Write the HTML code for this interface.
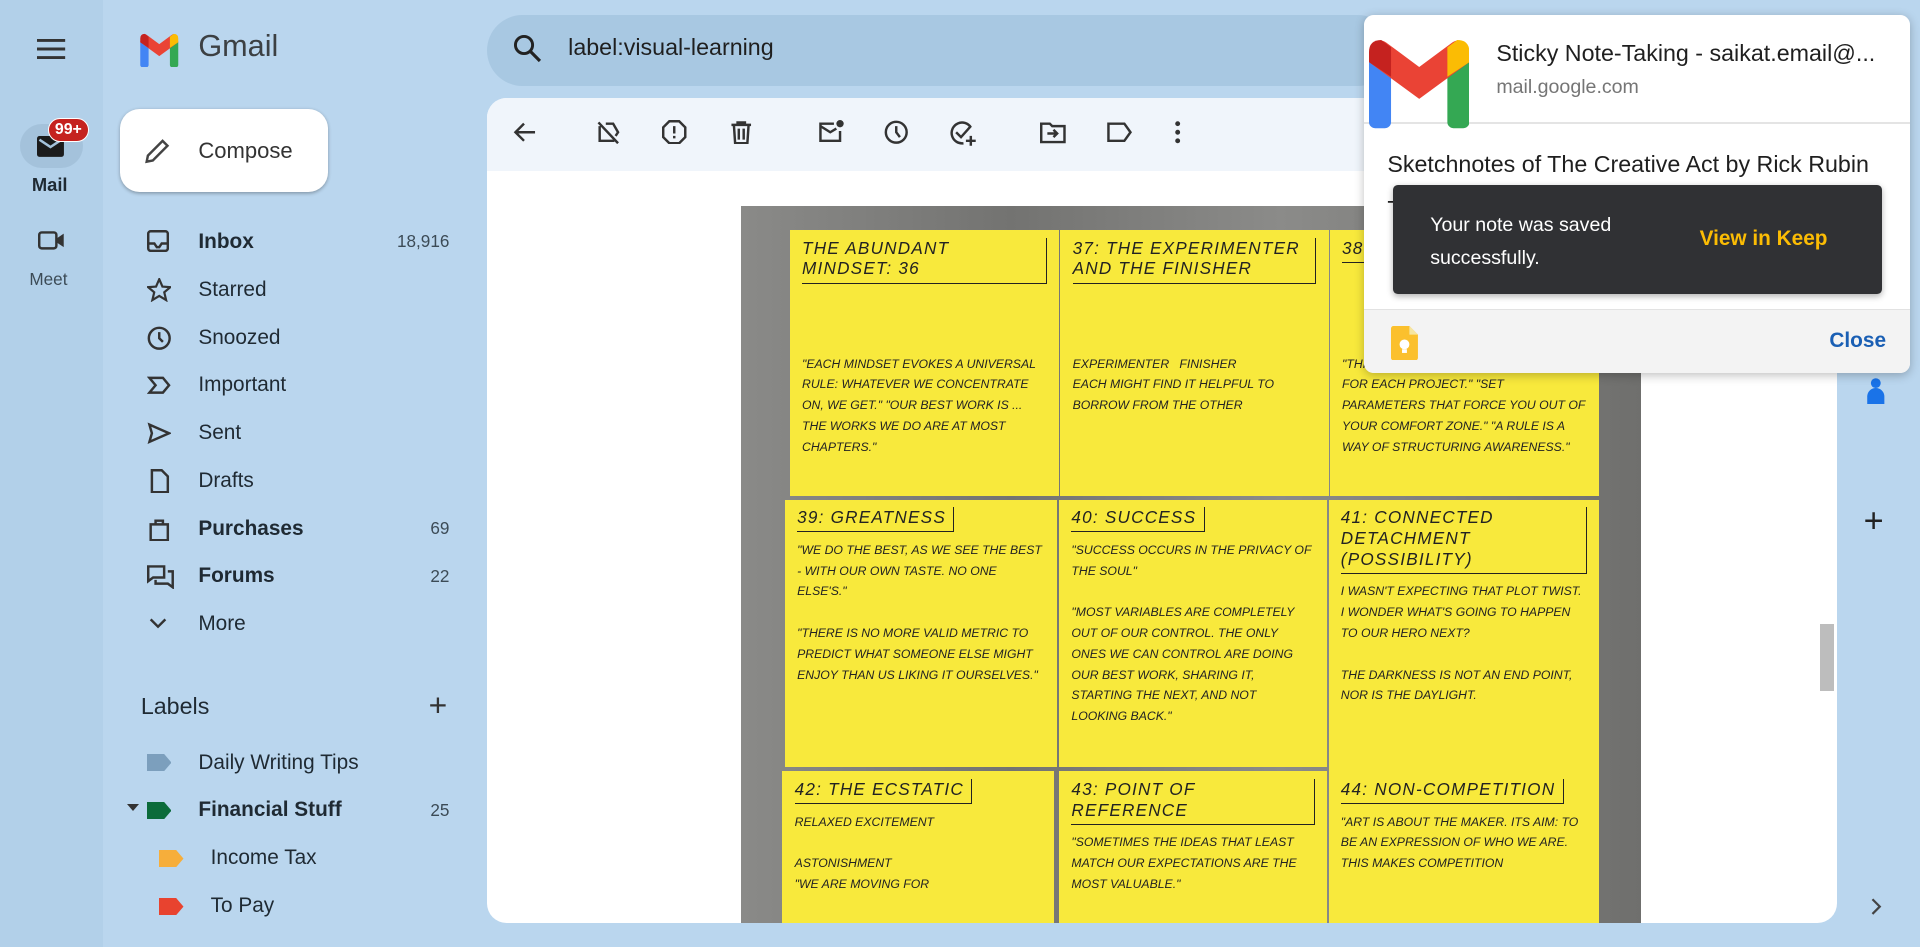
<!DOCTYPE html>
<html><head><meta charset="utf-8"><style>
html,body{margin:0;padding:0;width:1920px;height:947px;overflow:hidden;background:#bad6ee;}
#w{zoom:1.22449;width:1568px;height:774px;position:relative;font-family:"Liberation Sans",sans-serif;color:#1f1f1f;}
.a{position:absolute}
.rail{left:0;top:0;width:84px;height:774px;background:#b2d0e9}
.nav{left:98px;width:282px;height:39px}
.nav .t{position:absolute;left:64px;top:10px;font-size:17px;color:#1f2a33}
.nav .c{position:absolute;right:13px;top:11px;font-size:14px;color:#3c4b56}
.nav svg{position:absolute;left:22px;top:10px}
.b{font-weight:bold}
.note{position:absolute;background:#f8e93c;font-family:"Liberation Sans",sans-serif;font-style:italic;color:#222;font-size:10px;line-height:17px;padding:6px 10px;box-sizing:border-box;overflow:hidden}
.note h4{margin:0 0 6px;font-size:14px;font-weight:normal;letter-spacing:1px;border-bottom:1.5px solid #222;border-right:1.5px solid #222;display:inline-block;padding:0 6px 3px 0}
.ti svg{position:absolute;top:98px}
</style></head><body><div id="w">
<div class="a rail"></div>
<svg class="a" style="left:30px;top:31px" width="24" height="18"><path d="M0 2h23M0 9h23M0 16h23" stroke="#333" stroke-width="2.4"/></svg>
<div class="a" style="left:16px;top:101px;width:52px;height:36px;border-radius:18px;background:#a4c2db"></div>
<svg class="a" style="left:30px;top:111px" width="22" height="17"><rect width="22" height="17" rx="2" fill="#1b1b1b"/><path d="M2 3l9 6 9-6" stroke="#a4c2db" stroke-width="2" fill="none"/></svg>
<div class="a" style="left:39px;top:96px;background:#c5221f;color:#fff;font-size:13px;font-weight:bold;border-radius:10px;padding:2px 5px;border:1px solid #fff">99+</div>
<div class="a" style="left:26px;top:142px;font-size:15px;font-weight:bold;color:#1f2a33">Mail</div>
<svg class="a" style="left:31px;top:188px" width="22" height="17"><rect x="1" y="2" width="14" height="13" rx="2" fill="none" stroke="#333" stroke-width="2"/><path d="M15 7l6-4v11l-6-4z" fill="#333"/></svg>
<div class="a" style="left:24px;top:220px;font-size:14px;color:#3c4b56">Meet</div>
<svg class="a" style="left:111px;top:27px" width="38" height="28" viewBox="0 0 82 74"><rect x="0" y="16" width="18" height="58" rx="5" fill="#4285f4"/><rect x="64" y="16" width="18" height="58" rx="5" fill="#34a853"/><path d="M2 6 Q8 0 14 4 L41 24 L68 4 Q74 0 80 6 L82 20 L41 50 L0 20 Z" fill="#ea4335"/><path d="M0 20 V12 Q0 2 10 2 L18 8 V32 Z" fill="#c5221f"/><path d="M82 20 V12 Q82 2 72 2 L64 8 V32 Z" fill="#fbbc04"/></svg>
<div class="a" style="left:162px;top:24px;font-size:25px;color:#3c4043">Gmail</div>
<div class="a" style="left:98px;top:89px;width:170px;height:68px;background:#fff;border-radius:16px;box-shadow:0 1px 3px rgba(0,0,0,.3)"></div>
<svg class="a" style="left:117px;top:111px" width="24" height="24"><path d="M3 21l1-5L16 4l4 4L8 20z" fill="none" stroke="#444" stroke-width="2"/></svg>
<div class="a" style="left:162px;top:113px;font-size:18px;color:#333">Compose</div>
<div class="a nav" style="top:178px"><svg width="18" height="18"><rect x="1" y="1" width="16" height="16" rx="2" fill="none" stroke="#333" stroke-width="2"/><path d="M1 11h5l2 3h2l2-3h5" fill="none" stroke="#333" stroke-width="2"/></svg><span class="t b">Inbox</span><span class="c">18,916</span></div>
<div class="a nav" style="top:217px"><svg width="20" height="20"><path d="M10 1l2.6 6 6.4.5-4.9 4.2 1.5 6.3L10 14.6 4.4 18l1.5-6.3L1 7.5 7.4 7z" fill="none" stroke="#333" stroke-width="1.8"/></svg><span class="t">Starred</span></div>
<div class="a nav" style="top:256px"><svg width="20" height="20"><circle cx="10" cy="10" r="8.5" fill="none" stroke="#333" stroke-width="2"/><path d="M10 5v5l3 3" fill="none" stroke="#333" stroke-width="2"/></svg><span class="t">Snoozed</span></div>
<div class="a nav" style="top:295px"><svg width="20" height="20"><path d="M2 4h11l5 6-5 6H2l5-6z" fill="none" stroke="#333" stroke-width="2"/></svg><span class="t">Important</span></div>
<div class="a nav" style="top:334px"><svg width="20" height="20"><path d="M2 3l16 7-16 7 2-7z" fill="none" stroke="#333" stroke-width="2"/></svg><span class="t">Sent</span></div>
<div class="a nav" style="top:373px"><svg width="20" height="20"><path d="M4 1h8l5 5v13H4z" fill="none" stroke="#333" stroke-width="2"/></svg><span class="t">Drafts</span></div>
<div class="a nav" style="top:412px"><svg width="20" height="20"><path d="M3 6h14v13H3z M7 6V3h6v3" fill="none" stroke="#333" stroke-width="2"/></svg><span class="t b">Purchases</span><span class="c">69</span></div>
<div class="a nav" style="top:451px"><svg width="22" height="20"><path d="M1 2h13v9H5l-4 3z M7 13v3h10l4 3V6h-4" fill="none" stroke="#333" stroke-width="2"/></svg><span class="t b">Forums</span><span class="c">22</span></div>
<div class="a nav" style="top:490px"><svg width="18" height="18"><path d="M3 6l6 6 6-6" fill="none" stroke="#333" stroke-width="2"/></svg><span class="t">More</span></div>
<div class="a" style="left:115px;top:566px;font-size:19px;color:#1f2a33">Labels</div>
<div class="a" style="left:350px;top:561px;font-size:26px;color:#333">+</div>
<div class="a nav" style="top:603px"><svg width="20" height="14" style="top:13px"><path d="M0 0h14l6 7-6 7H0z" fill="#7c9fbd"/></svg><span class="t">Daily Writing Tips</span></div>
<div class="a" style="left:104px;top:657px;width:0;height:0;border-left:5px solid transparent;border-right:5px solid transparent;border-top:6px solid #333"></div>
<div class="a nav" style="top:642px"><svg width="20" height="14" style="top:13px"><path d="M0 0h14l6 7-6 7H0z" fill="#0b6b3a"/></svg><span class="t b">Financial Stuff</span><span class="c">25</span></div>
<div class="a nav" style="top:681px;left:108px"><svg width="20" height="14" style="top:13px"><path d="M0 0h14l6 7-6 7H0z" fill="#f6ae3b"/></svg><span class="t">Income Tax</span></div>
<div class="a nav" style="top:720px;left:108px"><svg width="20" height="14" style="top:13px"><path d="M0 0h14l6 7-6 7H0z" fill="#e8432f"/></svg><span class="t">To Pay</span></div>
<div class="a" style="left:398px;top:12px;width:740px;height:58px;border-radius:29px;background:#a8c8e2"></div>
<svg class="a" style="left:419px;top:28px" width="24" height="24"><circle cx="9" cy="9" r="7" fill="none" stroke="#222" stroke-width="2.4"/><path d="M14 14l8 8" stroke="#222" stroke-width="2.6"/></svg>
<div class="a" style="left:464px;top:28px;font-size:19px;color:#1f1f1f">label:visual-learning</div>
<div class="a" style="left:398px;top:80px;width:1102px;height:674px;background:#fff;border-radius:16px;overflow:hidden">
 <div style="height:60px;background:#f0f5fb"></div>
</div>
<div class="a ti" style="left:0;top:0">
<svg style="left:419px" width="20" height="20"><path d="M18 10H3M9 3l-7 7 7 7" fill="none" stroke="#333" stroke-width="2"/></svg>
<svg style="left:487px" width="20" height="20"><path d="M2 2l16 17M3 5v12h12M8 3h6l4 7-2 3" fill="none" stroke="#333" stroke-width="2"/></svg>
<svg style="left:541px" width="20" height="20"><path d="M6 1h8l5 5v8l-5 5H6l-5-5V6z" fill="none" stroke="#333" stroke-width="2"/><path d="M10 5v6M10 13v2" stroke="#333" stroke-width="2"/></svg>
<svg style="left:595px" width="20" height="20"><path d="M2 4h16M7 4V2h6v2M4 4l1 15h10l1-15M8 7v9M12 7v9" fill="none" stroke="#333" stroke-width="2"/></svg>
<svg style="left:668px" width="22" height="20"><path d="M13 3H2v14h16V9" fill="none" stroke="#333" stroke-width="2"/><path d="M2 5l8 5 5-3" fill="none" stroke="#333" stroke-width="2"/><circle cx="18" cy="3" r="3" fill="#333"/></svg>
<svg style="left:722px" width="20" height="20"><circle cx="10" cy="10" r="8.5" fill="none" stroke="#333" stroke-width="2"/><path d="M10 5v5l3 4" fill="none" stroke="#333" stroke-width="2"/></svg>
<svg style="left:776px" width="22" height="22"><path d="M17 6A8.5 8.5 0 1 0 11 19" fill="none" stroke="#333" stroke-width="2"/><path d="M5 10l4 4 8-9M17 13v8M13 17h8" fill="none" stroke="#333" stroke-width="2"/></svg>
<svg style="left:849px" width="22" height="20"><path d="M1 3h7l2 2h10v13H1z" fill="none" stroke="#333" stroke-width="2"/><path d="M6 11h8M11 8l3 3-3 3" fill="none" stroke="#333" stroke-width="2"/></svg>
<svg style="left:903px" width="22" height="20"><path d="M2 3h13l5 7-5 7H2z" fill="none" stroke="#333" stroke-width="2"/></svg>
<svg style="left:959px" width="6" height="20"><circle cx="3" cy="3" r="2" fill="#333"/><circle cx="3" cy="10" r="2" fill="#333"/><circle cx="3" cy="17" r="2" fill="#333"/></svg>
</div>
<div class="a" style="left:605px;top:168px;width:735px;height:586px;background:linear-gradient(90deg,#8a8a88,#737371 30%,#8b8b89 60%,#6f6f6d);overflow:hidden">
 <div class="note" style="left:40px;top:20px;width:220px;height:217px"><h4>THE ABUNDANT MINDSET: 36</h4><br><br><br><br>"EACH MINDSET EVOKES A UNIVERSAL RULE: WHATEVER WE CONCENTRATE ON, WE GET." "OUR BEST WORK IS ... THE WORKS WE DO ARE AT MOST CHAPTERS."</div>
 <div class="note" style="left:261px;top:20px;width:219px;height:217px"><h4>37: THE EXPERIMENTER AND THE FINISHER</h4><br><br><br><br>EXPERIMENTER &nbsp; FINISHER<br>EACH MIGHT FIND IT HELPFUL TO BORROW FROM THE OTHER</div>
 <div class="note" style="left:481px;top:20px;width:220px;height:217px"><h4>38</h4><br><br><br><br><br>"THINK OF THIS AS SETTING A PALETTE FOR EACH PROJECT." "SET PARAMETERS THAT FORCE YOU OUT OF YOUR COMFORT ZONE." "A RULE IS A WAY OF STRUCTURING AWARENESS."</div>
 <div class="note" style="left:36px;top:240px;width:222px;height:218px"><h4>39: GREATNESS</h4><br>"WE DO THE BEST, AS WE SEE THE BEST - WITH OUR OWN TASTE. NO ONE ELSE'S."<br><br>"THERE IS NO MORE VALID METRIC TO PREDICT WHAT SOMEONE ELSE MIGHT ENJOY THAN US LIKING IT OURSELVES."</div>
 <div class="note" style="left:260px;top:240px;width:219px;height:218px"><h4>40: SUCCESS</h4><br>"SUCCESS OCCURS IN THE PRIVACY OF THE SOUL"<br><br>"MOST VARIABLES ARE COMPLETELY OUT OF OUR CONTROL. THE ONLY ONES WE CAN CONTROL ARE DOING OUR BEST WORK, SHARING IT, STARTING THE NEXT, AND NOT LOOKING BACK."</div>
 <div class="note" style="left:480px;top:240px;width:221px;height:222px"><h4>41: CONNECTED DETACHMENT (POSSIBILITY)</h4><br>I WASN'T EXPECTING THAT PLOT TWIST. I WONDER WHAT'S GOING TO HAPPEN TO OUR HERO NEXT?<br><br>THE DARKNESS IS NOT AN END POINT, NOR IS THE DAYLIGHT.</div>
 <div class="note" style="left:34px;top:462px;width:222px;height:140px"><h4>42: THE ECSTATIC</h4><br>RELAXED EXCITEMENT<br><br>ASTONISHMENT<br>"WE ARE MOVING FOR</div>
 <div class="note" style="left:260px;top:462px;width:219px;height:140px"><h4>43: POINT OF REFERENCE</h4><br>"SOMETIMES THE IDEAS THAT LEAST MATCH OUR EXPECTATIONS ARE THE MOST VALUABLE."</div>
 <div class="note" style="left:480px;top:462px;width:221px;height:140px"><h4>44: NON-COMPETITION</h4><br>"ART IS ABOUT THE MAKER. ITS AIM: TO BE AN EXPRESSION OF WHO WE ARE. THIS MAKES COMPETITION</div>
</div>
<div class="a" style="left:1486px;top:510px;width:12px;height:54px;background:#bdbdbd"></div>
<svg class="a" style="left:1524px;top:308px" width="16" height="22"><circle cx="8" cy="5" r="4" fill="#1a73e8"/><path d="M1 22v-6a7 7 0 0 1 14 0v6z" fill="#1a73e8"/></svg>
<div class="a" style="left:1522px;top:410px;font-size:28px;color:#222">+</div>
<svg class="a" style="left:1527px;top:733px" width="10" height="14"><path d="M2 1l6 6-6 6" fill="none" stroke="#444" stroke-width="1.8"/></svg>
<div class="a" style="left:1114px;top:12px;width:446px;height:293px;background:#fff;border-radius:8px;box-shadow:0 2px 8px rgba(0,0,0,.25);overflow:hidden">
 <div style="position:absolute;left:0;top:240px;width:446px;height:53px;background:#f3f3f3;border-top:1px solid #e2e2e2"></div>
 <div style="position:absolute;left:0;top:88px;width:446px;height:1px;background:#e4e4e4"></div>
</div>
<svg class="a" style="left:1118px;top:30px" width="82" height="75" viewBox="0 0 82 74"><rect x="0" y="16" width="18" height="58" rx="5" fill="#4285f4"/><rect x="64" y="16" width="18" height="58" rx="5" fill="#34a853"/><path d="M2 6 Q8 0 14 4 L41 24 L68 4 Q74 0 80 6 L82 20 L41 50 L0 20 Z" fill="#ea4335"/><path d="M0 20 V12 Q0 2 10 2 L18 8 V32 Z" fill="#c5221f"/><path d="M82 20 V12 Q82 2 72 2 L64 8 V32 Z" fill="#fbbc04"/></svg>
<div class="a" style="left:1222px;top:33px;font-size:19px;color:#1f1f1f">Sticky Note-Taking - saikat.email@...</div>
<div class="a" style="left:1222px;top:62px;font-size:16px;color:#757575">mail.google.com</div>
<div class="a" style="left:1133px;top:123px;font-size:19px;color:#1f1f1f">Sketchnotes of The Creative Act by Rick Rubin</div>
<div class="a" style="left:1133px;top:160px;font-size:19px;color:#1f1f1f">T</div>
<div class="a" style="left:1138px;top:151px;width:399px;height:89px;background:#303134;border-radius:4px;box-shadow:0 2px 5px rgba(0,0,0,.3)"></div>
<div class="a" style="left:1168px;top:171px;font-size:16px;line-height:27px;color:#fff">Your note was saved<br>successfully.</div>
<div class="a" style="left:1388px;top:185px;font-size:17px;color:#fbbc04;font-weight:bold">View in Keep</div>
<svg class="a" style="left:1136px;top:266px" width="22" height="28"><path d="M0 2a2 2 0 0 1 2-2h13l7 7v19a2 2 0 0 1-2 2H2a2 2 0 0 1-2-2z" fill="#fbc02d"/><path d="M15 0v7h7z" fill="#f6e5a0"/><circle cx="11" cy="15" r="4" fill="#fff"/><rect x="9" y="19" width="4" height="3" fill="#fff"/></svg>
<div class="a" style="left:1494px;top:269px;font-size:17px;color:#1a5fb4;font-weight:bold">Close</div>
</div></body></html>
